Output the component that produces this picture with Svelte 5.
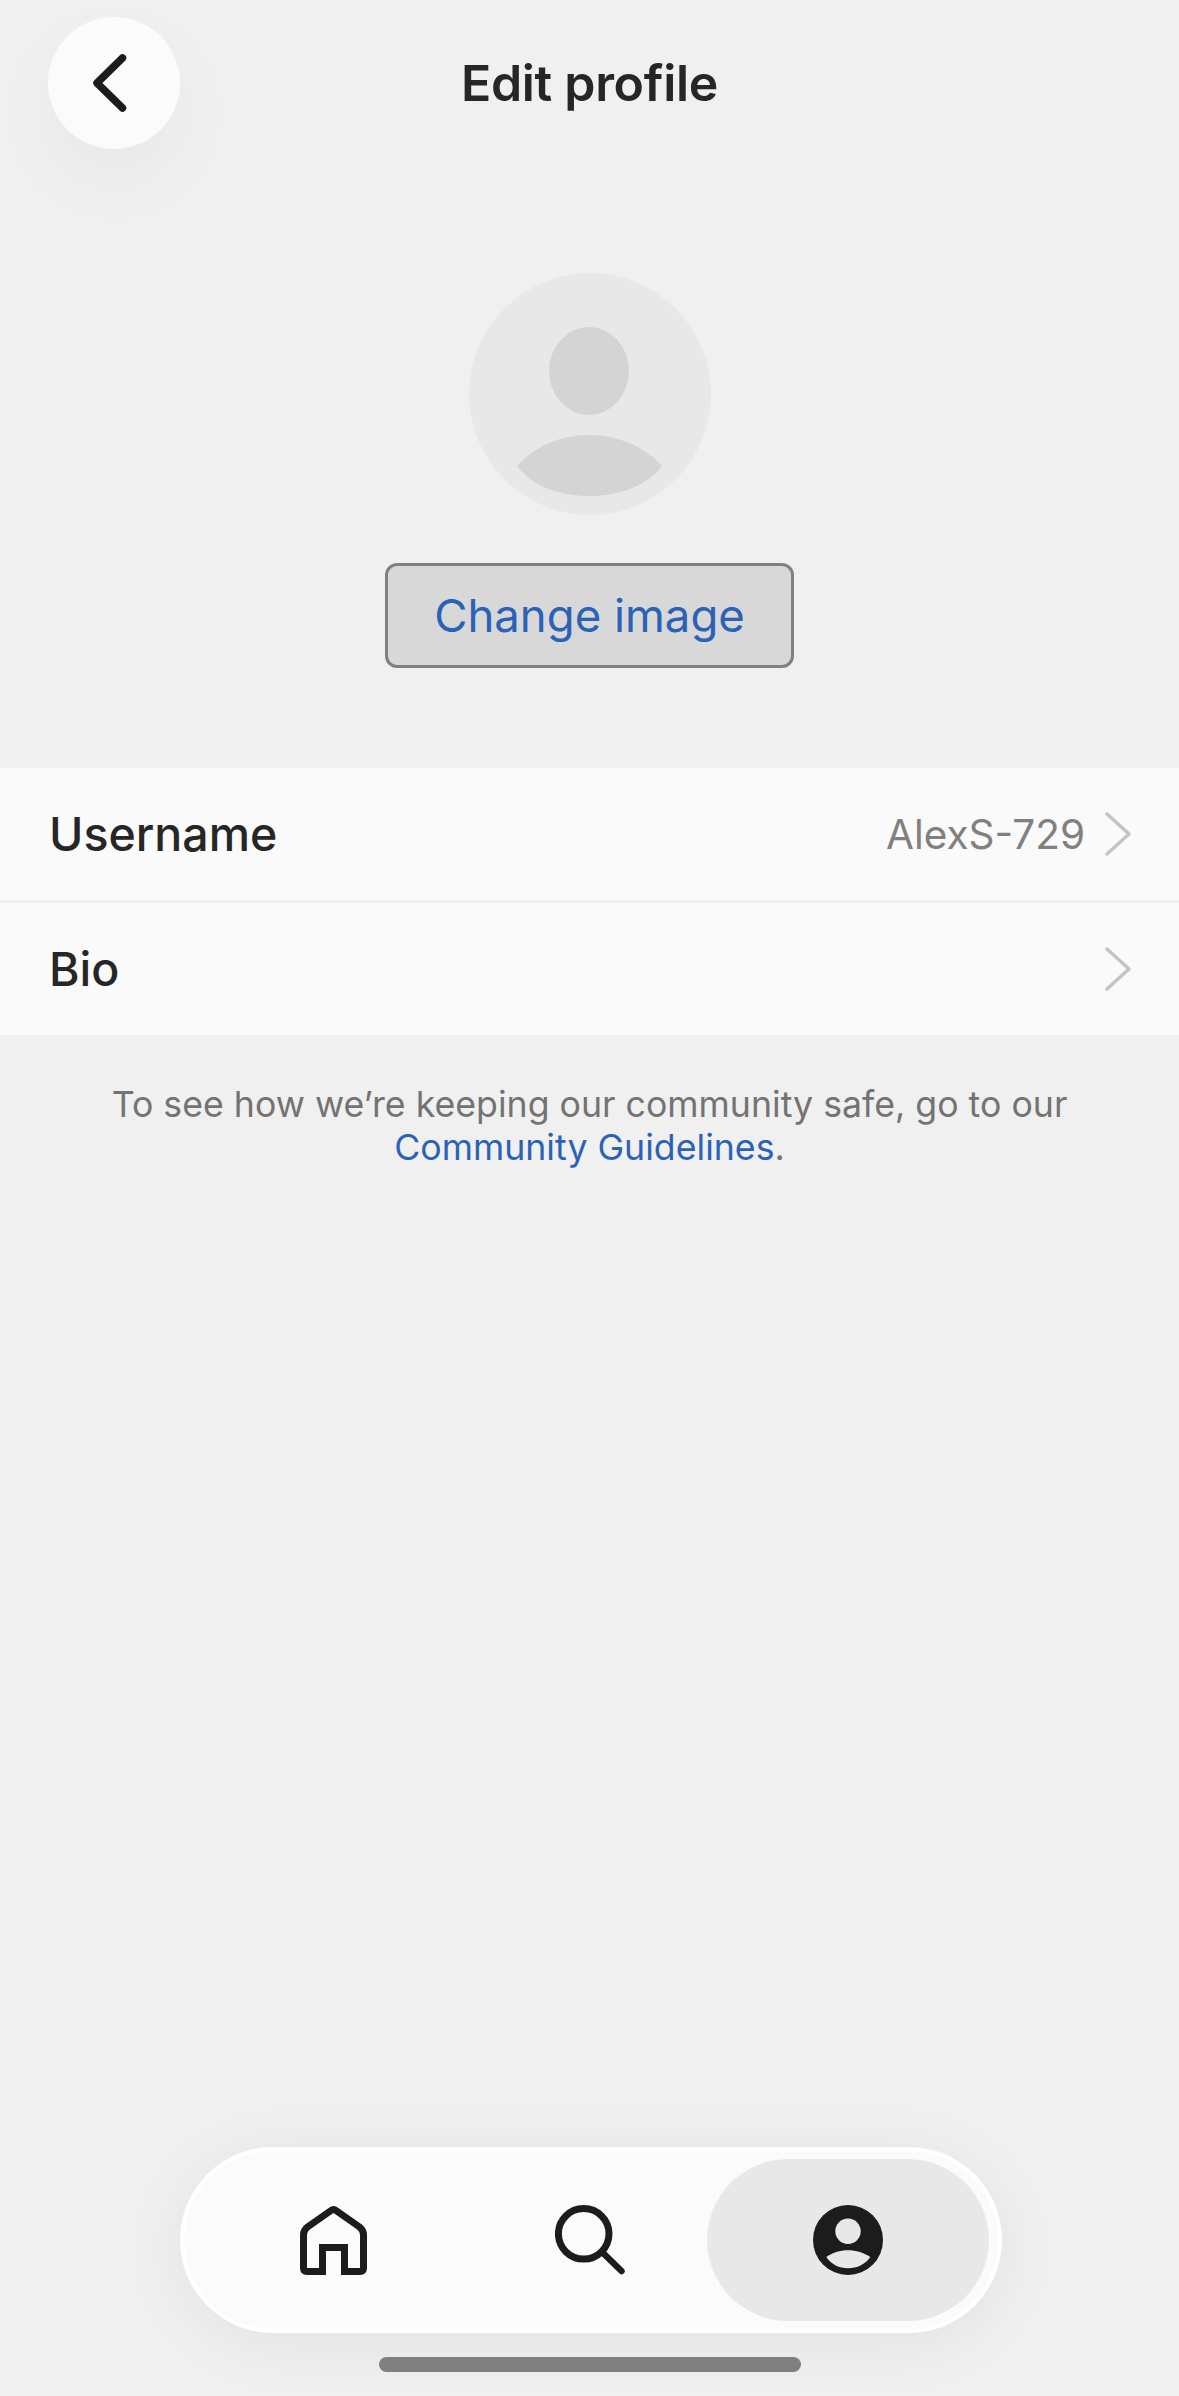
<script>
let rows = [
	{ label: 'Username', value: 'AlexS-729' },
	{ label: 'Bio', value: '' }
]
</script>

<div class="page">
	<header class="top">
		<button class="back" aria-label="Back">
			<svg width="132" height="132" viewBox="0 0 132 132">
				<path d="M74.500 41 L49 66 L74.500 91" fill="none" stroke="#1c1c1c" stroke-width="7.500" stroke-linecap="round" stroke-linejoin="round" />
			</svg>
		</button>
		<h1>Edit profile</h1>
	</header>

	<section class="photo">
		<svg class="avatar" width="242" height="242" viewBox="0 0 242 242">
			<circle cx="121" cy="121" r="121" fill="#e8e8e8" />
			<ellipse cx="120" cy="98" rx="40" ry="44" fill="#d4d4d4" />
			<path d="M48 193 C66 173 92 162 120 162 C148 162 175 173 193 193 C178 213 150 223 120 223 C90 223 63 213 48 193 Z" fill="#d4d4d4" />
		</svg>
		<button class="change">Change image</button>
	</section>

	<ul class="rows">
		{#each rows as row}
			<li>
				<span class="label">{row.label}</span>
				<span class="value">{row.value}</span>
				<svg width="26" height="44" viewBox="0 0 26 44">
					<path d="M2 2 L24 22 L2 42" fill="none" stroke="#c4c4c4" stroke-width="3.5" stroke-linecap="round" stroke-linejoin="round" />
				</svg>
			</li>
		{/each}
	</ul>

	<p class="note">
		To see how we’re keeping our community safe, go to our<br />
		<span class="link">Community Guidelines</span>.
	</p>

	<nav class="tabs">
		<div class="tab">
			<svg width="67" height="70" viewBox="0 0 67 70">
				<path d="M36 5.500 Q33.500 3.500 31 5.500 L7.500 22 Q3.500 25 3.500 30 V63 Q3.500 66.500 7 66.500 H22.500 V42.500 H44.500 V66.500 H60 Q63.500 66.500 63.500 63 V30 Q63.500 25 59.500 22 Z" fill="none" stroke="#1c1c1c" stroke-width="7" stroke-linejoin="miter" />
			</svg>
		</div>
		<div class="tab">
			<svg width="70" height="70" viewBox="0 0 70 70">
				<circle cx="28.700" cy="28.800" r="25.300" fill="none" stroke="#1c1c1c" stroke-width="7" />
				<path d="M47 47 L66.500 66" stroke="#1c1c1c" stroke-width="6.500" stroke-linecap="round" />
			</svg>
		</div>
		<div class="tab active">
			<svg width="70" height="70" viewBox="0 0 70 70">
				<circle cx="35" cy="35" r="35" fill="#1c1c1c" />
				<circle cx="35" cy="26.300" r="12.700" fill="#e8e8e8" />
				<path d="M13.300 52 C19 48 27 45.300 35 45.300 C43 45.300 51 48 57.300 52 C52 59.500 44 63.300 35 63.300 C26 63.300 18.500 59.500 13.300 52 Z" fill="#e8e8e8" />
			</svg>
		</div>
	</nav>

	<div class="home-bar"></div>
</div>

<style>
	:global(body) {
		background: #f0f0f0;
	}

	.page {
		display: flex;
		flex-direction: column;
		height: 2396px;
		overflow: hidden;
		background: #f0f0f0;
		font-family: Inter, "Liberation Sans", sans-serif;
	}

	.top {
		display: grid;
		grid-template-columns: 1fr auto 1fr;
		align-items: center;
		height: 132px;
		margin-top: 17px;
		padding: 0 48px;
	}

	.back {
		display: block;
		width: 132px;
		height: 132px;
		padding: 0;
		border: none;
		border-radius: 50%;
		background: #fbfbfb;
		box-shadow: 0 30px 80px rgba(0, 0, 0, 0.04);
	}

	.back svg {
		display: block;
	}

	h1 {
		margin: 0;
		font-size: 50px;
		font-weight: 600;
		letter-spacing: -0.3px;
		color: #262626;
	}

	.photo {
		display: flex;
		flex-direction: column;
		align-items: center;
		margin-top: 124px;
	}

	.change {
		width: 409px;
		height: 105px;
		margin-top: 48px;
		border: 3px solid #808080;
		border-radius: 12px;
		background: #d8d8d8;
		font: 400 45.5px Inter, "Liberation Sans", sans-serif;
		color: #2a62b8;
	}

	.rows {
		margin: 100px 0 0;
		padding: 0;
		list-style: none;
		background: #fafafa;
	}

	li {
		display: flex;
		align-items: center;
		height: 132px;
		padding: 0 48px 0 49px;
		font-size: 46.5px;
	}

	li + li {
		height: 132px;
		border-top: 3px solid #f0f0f0;
	}

	.label {
		flex: 1;
		font-weight: 500;
		color: #262626;
	}

	.value {
		margin-right: 20px;
		font-size: 40.5px;
		color: #808080;
	}

	.note {
		margin: 48px 0 0;
		text-align: center;
		font-size: 35.7px;
		line-height: 43px;
		color: #737373;
	}

	.link {
		color: #2a62b8;
	}

	.tabs {
		display: grid;
		grid-template-columns: 283px 230px 284px;
		align-items: center;
		box-sizing: border-box;
		width: 822px;
		height: 186px;
		margin: auto 0 0 180px;
		padding: 8px;
		border: 4px solid #fff;
		border-radius: 93px;
		background: #fbfbfb;
		box-shadow: 0 10px 70px rgba(0, 0, 0, 0.06);
	}

	.tab {
		display: flex;
		align-items: center;
		justify-content: center;
		height: 162px;
	}

	.active {
		margin-left: 2px;
		border-radius: 81px;
		background: #e8e8e8;
	}

	.home-bar {
		align-self: center;
		width: 422px;
		height: 15px;
		margin: 24px 0 24px;
		border-radius: 8px;
		background: #808080;
	}
</style>
